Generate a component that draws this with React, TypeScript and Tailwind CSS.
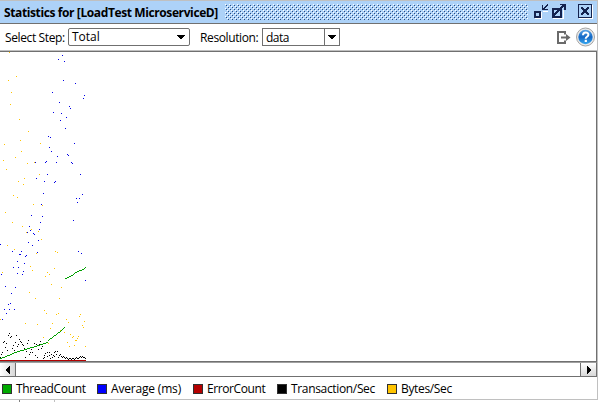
const YELLOW: number[][] = [
  [9,52],[16,76],[8,80],[11,92],[10,104],[19,119],[28,131],[20,140],[40,143],[4,144],[21,151],[15,157],
  [3,160],[27,163],[34,162],[6,169],[39,174],[24,178],[18,181],[23,184],[13,195],[17,197],[33,204],[42,205],
  [5,212],[12,222],[22,226],[31,229],[26,232],[38,231],[41,239],[7,245],[14,249],[36,253],[55,251],[57,252],
  [30,266],[32,270],[2,272],[54,268],[47,272],[49,274],[45,276],[51,284],[61,287],[29,292],[35,298],[59,298],
  [44,310],[46,313],[56,314],[58,313],[52,323],[50,328],[0,319],[25,323],[37,324],[66,319],[80,314],[79,316],
  [84,321],[68,322],[82,325],[83,327],[43,337],[60,330],[64,332],[70,334],[72,337],[73,336],[78,336],[77,338],
  [75,340],[76,340],[67,342],[74,345],[69,346],[85,346],[48,343],
];

const BLUE: number[][] = [
  [62,55],[58,59],[64,61],[63,80],[75,83],[52,92],[84,95],[83,98],[59,102],[69,106],[70,108],[53,112],[61,113],
  [66,117],[60,120],[65,128],[48,136],[50,137],[74,143],[49,147],[51,151],[67,154],[68,155],[57,156],
  [35,162],[45,162],[46,161],[56,162],[71,162],[72,163],[36,178],[47,174],[44,181],[55,181],[54,182],[80,174],
  [43,193],[82,194],[76,198],[79,198],[77,202],[41,204],[31,215],[42,216],[73,220],[40,222],[29,226],[39,229],
  [30,230],[27,232],[33,233],[34,234],[38,240],[28,242],[0,244],[32,245],[12,251],[21,251],[19,254],[20,254],
  [26,255],[25,256],[37,252],[78,251],[81,253],[17,261],[24,263],[13,267],[18,267],[1,274],[17,273],[23,271],
  [22,274],[5,286],[15,287],[11,293],[10,303],[8,304],[4,309],[9,309],[14,309],[6,313],[2,319],[85,280],
];

const BLACK: number[][] = [
  [9,333],[8,335],[11,336],[10,337],[16,335],[19,339],[20,341],[21,342],[28,340],[4,341],[3,342],[15,342],[6,343],
  [13,345],[17,346],[18,344],[22,344],[23,345],[27,343],[5,347],[12,348],[24,348],[7,350],[14,350],[2,352],[1,354],
  [0,357],[29,354],[30,352],[32,352],[25,357],[33,347],[34,343],[36,344],[40,341],[39,344],[31,349],[38,349],
  [42,346],[35,355],[37,357],[26,351],[41,348],[43,358],[44,357],[44,355],[45,353],[47,352],[47,356],[49,355],
  [50,358],[49,352],[51,354],[54,352],[55,351],[57,351],[53,355],[52,357],[54,356],[56,354],[59,355],[60,354],
  [58,357],[61,356],[62,357],[63,356],[64,357],[65,358],[66,357],[67,358],[68,359],[69,358],[70,358],[71,359],
  [72,358],[73,358],[74,359],[75,358],[76,357],[77,358],[78,358],[79,357],[80,356],[81,357],[82,356],[83,357],
  [84,357],[85,358],
];

const GREEN_A: number[][] = [
  [0,358],[3,357],[5,356],[8,355],[10,354],[12,353],[15,352],[18,351],[21,350],[25,349],[28,348],[31,347],[35,346],
  [38,345],[41,344],[44,343],[47,342],[48,340],[50,338],[52,337],[54,335],[56,334],[58,332],[60,331],[62,329],[64,327],
];
const GREEN_B: number[][] = [[65,278],[67,277],[69,276],[71,275],[73,274],[75,272],[77,271],[80,270],[83,269],[84,268],[85,267]];

const TOP = 52;

function dots(points: number[][]) {
  return points.map(([x, y]) => `M${x} ${y - TOP}h1v1h-1z`).join("");
}

// One pixel per column, stepping between the given vertices.
function trace(points: number[][]) {
  const out: number[][] = [];
  for (let i = 0; i < points.length - 1; i++) {
    const [x0, y0] = points[i];
    const [x1, y1] = points[i + 1];
    for (let x = x0; x < x1; x++) out.push([x, Math.round(y0 + ((y1 - y0) * (x - x0)) / (x1 - x0))]);
  }
  out.push(points[points.length - 1]);
  return dots(out);
}

function Chart() {
  return (
    <svg className="block" width="596" height="309" shapeRendering="crispEdges">
      <path d={dots(YELLOW)} fill="#ffc400" />
      <path d={dots(BLUE)} fill="#0000e6" />
      <path d={dots(BLACK)} fill="#000" />
      <path d={trace(GREEN_A) + trace(GREEN_B)} fill="#00a000" />
      <rect x="0" y="308" width="86" height="1" fill="#b40000" />
    </svg>
  );
}

function Bumps() {
  return (
    <svg className="block" width="303" height="16" shapeRendering="crispEdges">
      <defs>
        <pattern id="bumps" width="4" height="4" patternUnits="userSpaceOnUse">
          <path d="M0 0h1v1h-1zM2 2h1v1h-1z" fill="#fff" />
          <path d="M1 1h1v1h-1zM3 3h1v1h-1z" fill="#2a4a80" />
        </pattern>
      </defs>
      <rect width="303" height="16" fill="url(#bumps)" />
    </svg>
  );
}

function TitleButtons() {
  return (
    <svg className="block" width="62" height="18" shapeRendering="crispEdges" fill="none">
      <g stroke="#fff">
        <path d="M1 16.500h6.500v-7M9 9.500h5M19 16.500h10.500v-9M45 16.500h13.500v-14" />
      </g>
      <g fill="#14234f">
        <path fillRule="evenodd" d="M0 9h7v7h-7zM2 11v3h3v-3z" />
        <path d="M8 3h1v3h1v-1h1v-1h1v-1h1v-1h1v2h-1v1h-1v1h-1v1h3v1h-6z" />
        <path fillRule="evenodd" d="M18 6h10v10h-10zM20 8v6h6v-6z" />
        <path d="M26 2h6v6h-2v-3h-1v1h-1v1h-1v1h-1v1h-1v1h-1v1h-1v1h-1v1h-1v1h-2v-2h1v-1h1v-1h1v-1h1v-1h1v-1h1v-1h1v-1h1v-1h1v-1h-2z" />
        <path fillRule="evenodd" d="M44 2h14v14h-14zM45 3v12h12v-12z" />
        <path d="M47 5h2v1h1v1h2v-1h1v-1h2v2h-1v1h-1v2h1v1h1v2h-2v-1h-1v-1h-2v1h-1v1h-2v-2h1v-1h1v-2h-1v-1h-1z" />
      </g>
    </svg>
  );
}

function ExportIcon() {
  return (
    <svg className="block" width="15" height="15" fill="none" stroke="#6a6a6a">
      <path d="M9 4.500V2H2v11h7V10.500" strokeWidth="2" />
      <path d="M5 7.500h6" strokeWidth="2" />
      <path d="M10 4v7l4.500-3.500z" fill="#6a6a6a" stroke="none" />
    </svg>
  );
}

function HelpIcon() {
  return (
    <svg className="block" width="20" height="20">
      <defs>
        <linearGradient id="help" x1="0" y1="0" x2="0" y2="1">
          <stop offset="0" stopColor="#58a5e8" />
          <stop offset=".5" stopColor="#1467c4" />
          <stop offset="1" stopColor="#38a8f0" />
        </linearGradient>
      </defs>
      <circle cx="9.500" cy="10" r="9" fill="#e8e8e8" stroke="#a4a4a4" />
      <circle cx="9.500" cy="10" r="7.200" fill="url(#help)" />
      <path d="M7 8.200c0-3.600 5.400-3.500 5.400-.4 0 2-2.700 1.900-2.700 3.900" fill="none" stroke="#fff" strokeWidth="2" />
      <rect x="8.700" y="12.800" width="2.200" height="2.200" fill="#fff" />
    </svg>
  );
}

function Caret() {
  return (
    <svg className="block" width="8" height="4" shapeRendering="crispEdges">
      <path d="M0 0h8v1h-1v1h-1v1h-1v1h-2v-1h-1v-1h-1v-1h-1z" />
    </svg>
  );
}

const LEGEND = [
  { label: "ThreadCount", box: "w-[95px]", color: "bg-[#00aa00]", text: "tracking-[-0.34px]" },
  { label: "Average (ms)", box: "w-[96px]", color: "bg-[#0000ff]", text: "tracking-[-0.18px]" },
  { label: "ErrorCount", box: "w-[84px]", color: "bg-[#b40000]", text: "tracking-[-0.4px]" },
  { label: "Transaction/Sec", box: "w-[110px]", color: "bg-[#000000]", text: "tracking-[-0.34px]" },
  { label: "Bytes/Sec", box: "w-[70px]", color: "bg-[#ffc400]", text: "tracking-[-0.34px]" },
];

export default function App() {
  return (
    <div className="h-[402px] w-[600px] overflow-hidden bg-white font-['Open_Sans','Noto_Sans',sans-serif] text-[12px] leading-[16px] whitespace-nowrap text-black">
      <div className="h-[400px] w-[598px] border-t border-r border-b border-[#c0c0c0]">
        <header className="flex h-[23px] items-start border-b border-[#707070] bg-[#add2f8]">
          <div className="w-[221px] pt-[4px] pl-[4px] text-[12px] font-bold tracking-[-0.39px]">Statistics for [LoadTest MicroserviceD]</div>
          <div className="ml-[4px] pt-[3px]"><Bumps /></div>
          <div className="ml-[6px] pt-[1px]"><TitleButtons /></div>
        </header>

        <div className="flex h-[26px] items-center">
          <span className="ml-[5px] w-[63px] pt-[2px] tracking-[-0.38px]">Select Step:</span>
          <div className="flex h-[18px] w-[122px] items-center justify-between rounded-[2px] border border-[#707070] pr-[4px] pl-[3px]">
            <span>Total</span><Caret />
          </div>
          <span className="ml-[10px] w-[62px] pt-[2px] tracking-[-0.38px]">Resolution:</span>
          <div className="flex h-[18px] w-[78px] items-center border border-[#707070]">
            <span className="flex-1 pt-px pl-[3px] tracking-[-0.5px]">data</span>
            <span className="flex h-full w-[15px] items-center justify-center border-l border-[#707070]"><Caret /></span>
          </div>
          <div className="ml-[216px]"><ExportIcon /></div>
          <div className="ml-[5px] shrink-0"><HelpIcon /></div>
        </div>

        <main className="h-[312px] border-t border-[#c0c0c0]">
          <div className="h-[310px] border-t border-r border-[#707070]"><Chart /></div>
          <div className="h-px bg-[#707070]" />
        </main>

        <div className="flex h-[15px] border-t border-r border-b border-t-[#a0a0a0] border-r-[#707070] border-b-[#707070]">
          <div className="flex w-[16px] items-center justify-center border-r border-[#707070] bg-linear-to-r from-white to-[#d8d8d8]">
            <svg width="4" height="8" shapeRendering="crispEdges"><path d="M3 0h1v8h-1v-1h-1v-1h-1v-1h-1v-2h1v-1h1v-1h1z" /></svg>
          </div>
          <div className="flex-1" />
          <div className="flex w-[16px] items-center justify-center border-l border-[#707070] bg-linear-to-b from-white to-[#d8d8d8]">
            <svg width="4" height="8" shapeRendering="crispEdges"><path d="M0 0h1v1h1v1h1v1h1v2h-1v1h-1v1h-1v1h-1z" /></svg>
          </div>
        </div>

        <footer className="flex h-[22px] items-center pt-[2px] pl-[2px]">
          {LEGEND.map((item) => (
            <div key={item.label} className={`flex items-center ${item.box}`}>
              <span className={`size-[10px] border border-[#303030] ${item.color}`} />
              <span className={`ml-[4px] ${item.text}`}>{item.label}</span>
            </div>
          ))}
        </footer>
      </div>
      <div className="flex h-[2px]">
        <span className="ml-[19px] w-px bg-[#808080]" />
        <span className="ml-[34px] w-px bg-[#c0c0c0]" />
      </div>
    </div>
  );
}
